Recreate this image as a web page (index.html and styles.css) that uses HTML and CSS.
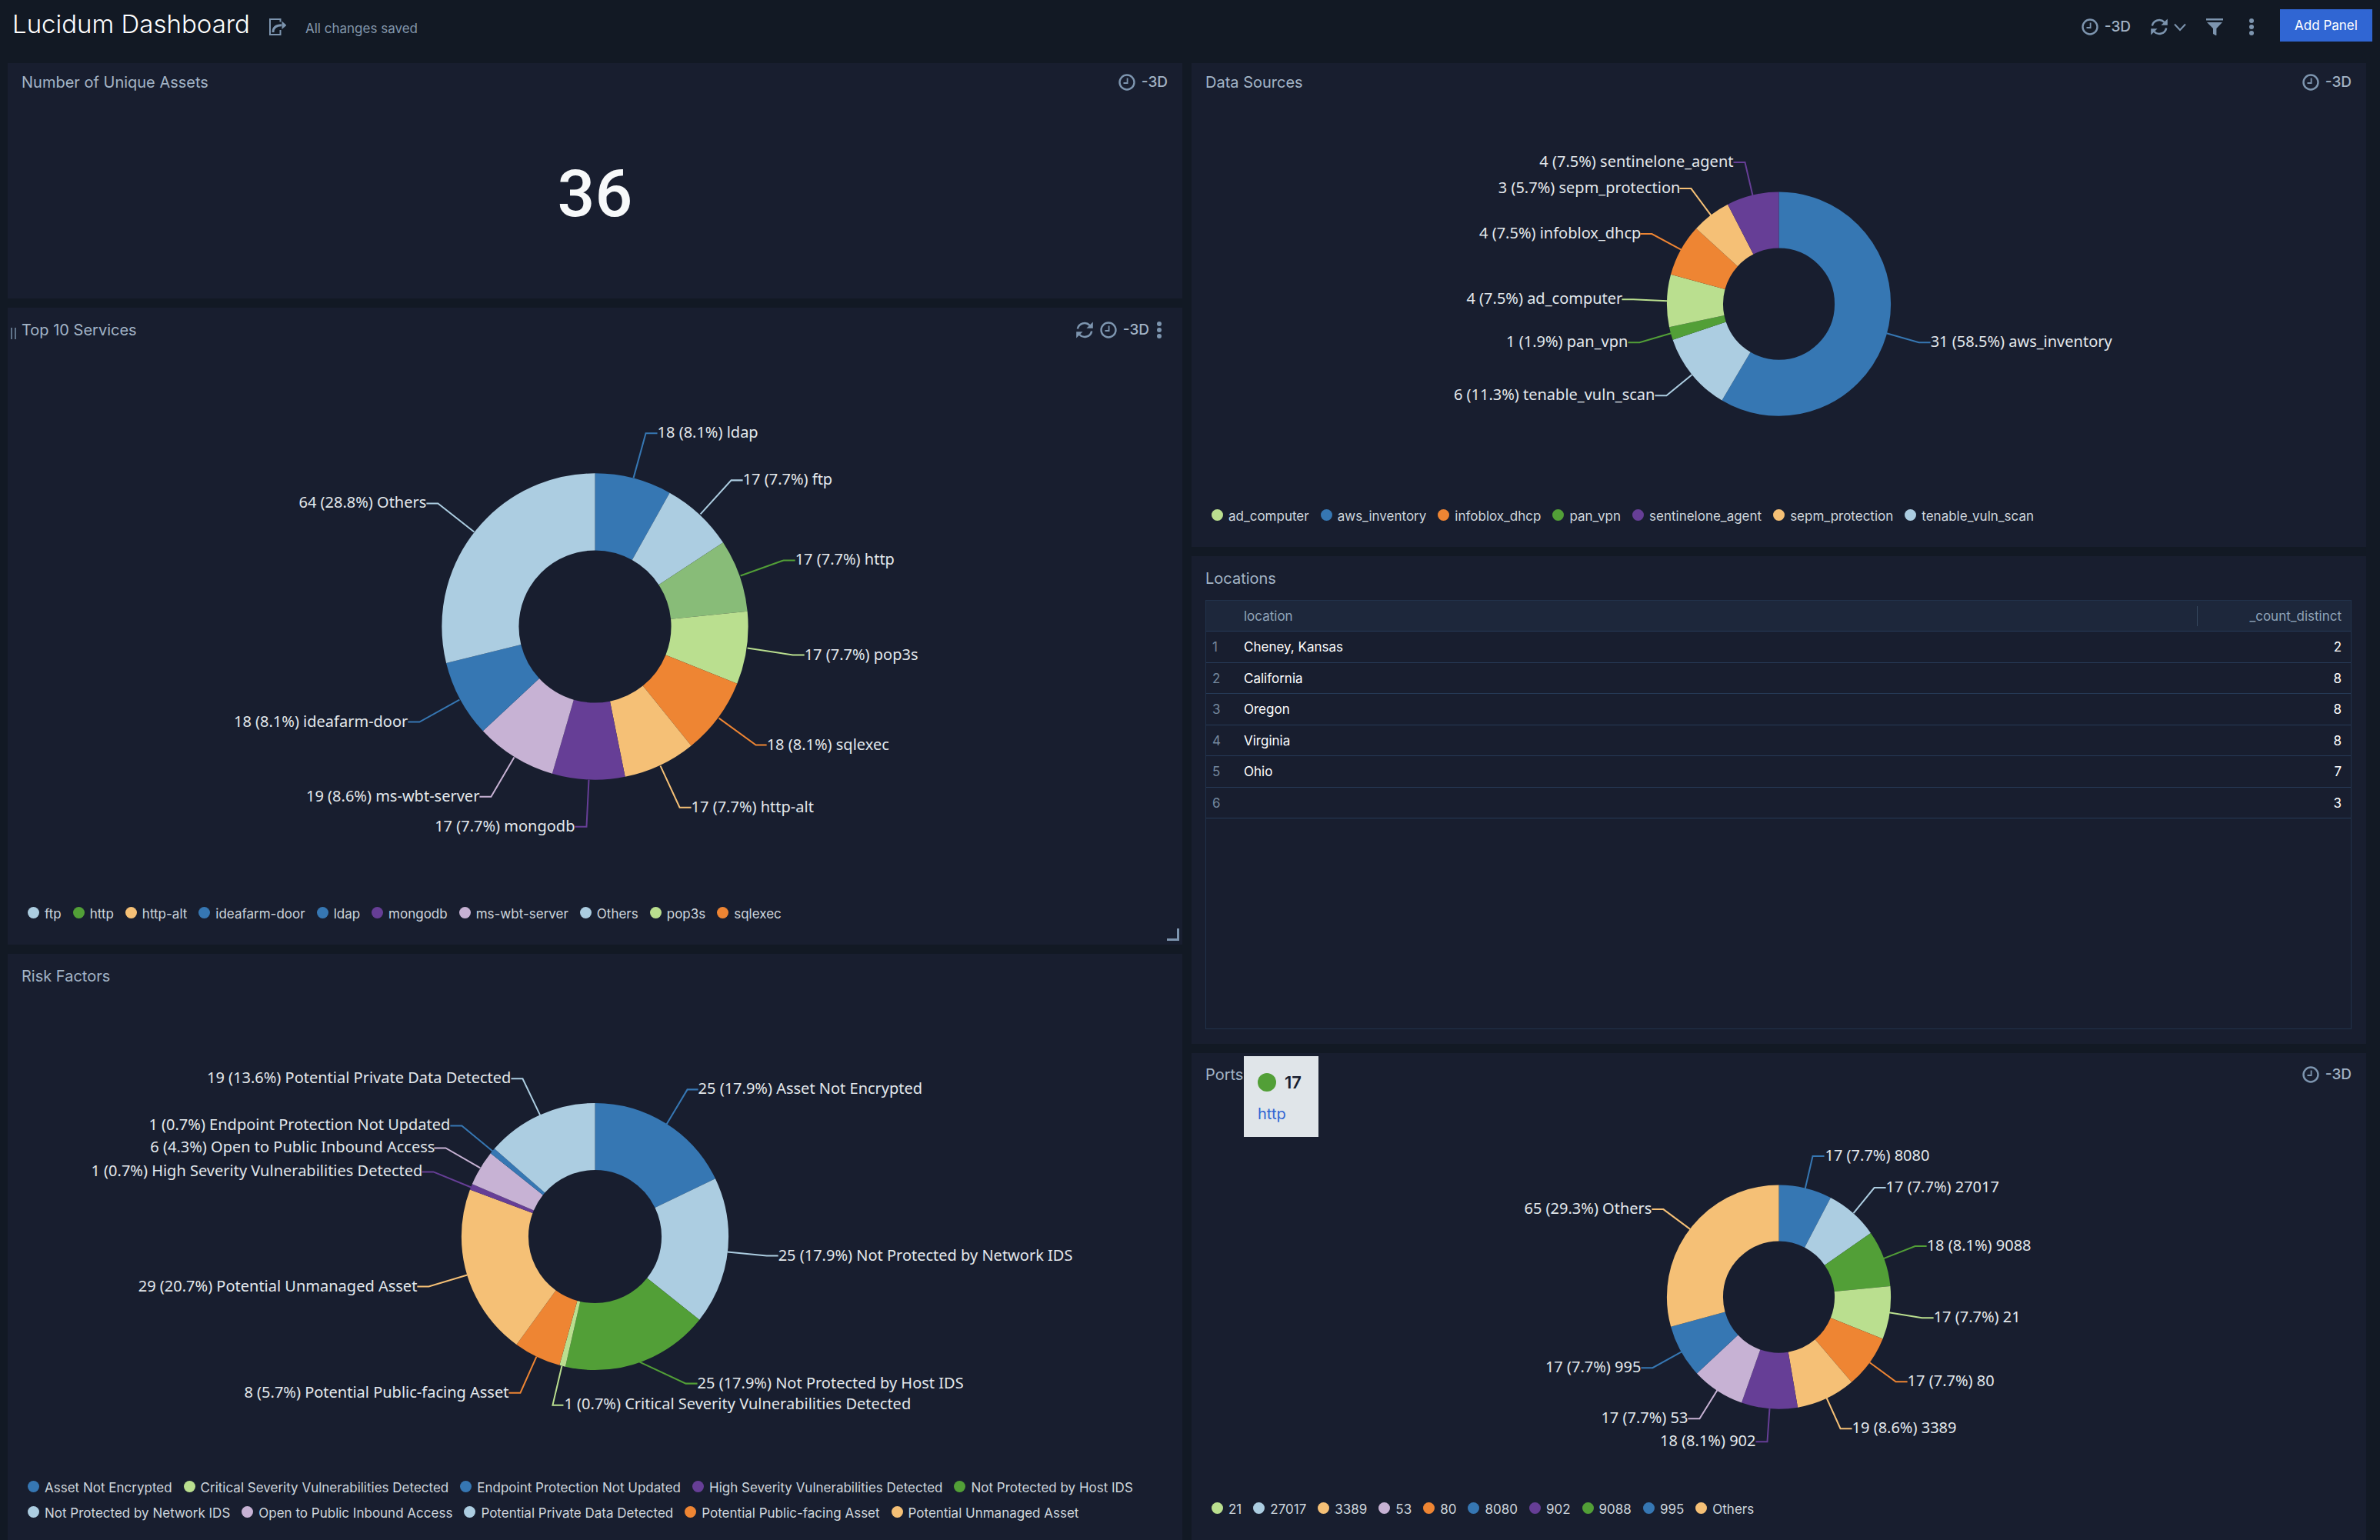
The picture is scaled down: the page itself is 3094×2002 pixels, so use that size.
FILE: index.html
```html
<!DOCTYPE html>
<html lang="en">
<head>
<meta charset="utf-8">
<title>Lucidum Dashboard</title>
<link rel="stylesheet" href="styles.css">
</head>
<body>
<svg class="sprite" aria-hidden="true">
  <symbol id="i-clock" viewBox="0 0 22 22"><circle cx="11" cy="11" r="9.5" fill="none" stroke="currentColor" stroke-width="2.4"/><path d="M11.6 5.5V12H6.5" fill="none" stroke="currentColor" stroke-width="1.8"/></symbol>
  <symbol id="i-refresh" viewBox="0 0 22 22"><path d="M1.8 9.6A9.3 9.3 0 0 1 17.6 4.9M20.2 12.4A9.3 9.3 0 0 1 4.4 17.1" fill="none" stroke="currentColor" stroke-width="2.5"/><path d="M21.8 .6V8.8H13.4ZM.2 21.4V13.2H8.6Z" fill="currentColor"/></symbol>
  <symbol id="i-dots" viewBox="0 0 8 22"><g fill="currentColor"><circle cx="4" cy="3" r="3"/><circle cx="4" cy="11" r="3"/><circle cx="4" cy="19" r="3"/></g></symbol>
  <symbol id="i-filter" viewBox="0 0 22 22"><path d="M0 0H22V2.6H0ZM1 5H21L13.4 13V22.6L9 20V13Z" fill="currentColor"/></symbol>
  <symbol id="i-chevron" viewBox="0 0 16 22"><path d="M1 7.5L8 15L15 7.5" fill="none" stroke="currentColor" stroke-width="2"/></symbol>
  <symbol id="i-share" viewBox="0 0 22 22"><path d="M14.5 4.5V1H1V21H14.5V15" fill="none" stroke="currentColor" stroke-width="2"/><path d="M5 18C5 11.5 8.5 8.8 16 8.8" fill="none" stroke="currentColor" stroke-width="3"/><path d="M16.5 3.5L22.4 8.8L16.5 14Z" fill="currentColor"/></symbol>
</svg>

<header class="topbar">
  <h1 class="topbar-title">Lucidum Dashboard</h1>
  <button class="icon-button" type="button" aria-label="Share"><svg class="icon"><use href="#i-share"/></svg></button>
  <span class="topbar-status">All changes saved</span>
  <div class="topbar-actions">
    <button class="icon-button" type="button"><svg class="icon"><use href="#i-clock"/></svg><span>-3D</span></button>
    <button class="icon-button" type="button" aria-label="Refresh"><svg class="icon"><use href="#i-refresh"/></svg><svg class="icon icon-chevron"><use href="#i-chevron"/></svg></button>
    <button class="icon-button" type="button" aria-label="Filter"><svg class="icon"><use href="#i-filter"/></svg></button>
    <button class="icon-button" type="button" aria-label="More"><svg class="icon"><use href="#i-dots"/></svg></button>
    <button class="primary-button" type="button">Add Panel</button>
  </div>
</header>

<main class="board">
  <div class="column">
    <section class="panel panel-assets">
      <div class="panel-head"><h2>Number of Unique Assets</h2>
        <div class="panel-tools"><button class="icon-button" type="button"><svg class="icon"><use href="#i-clock"/></svg><span>-3D</span></button></div></div>
      <p class="big-number">36</p>
    </section>

    <section class="panel panel-services">
      <span class="drag-handle"></span>
      <div class="panel-head"><h2>Top 10 Services</h2>
        <div class="panel-tools panel-tools-active">
          <button class="icon-button" type="button" aria-label="Refresh panel"><svg class="icon"><use href="#i-refresh"/></svg></button>
          <button class="icon-button" type="button"><svg class="icon"><use href="#i-clock"/></svg><span>-3D</span></button>
          <button class="icon-button" type="button" aria-label="Panel menu"><svg class="icon icon-dots"><use href="#i-dots"/></svg></button>
        </div></div>
      <svg class="chart" viewBox="-763 -300 1526 600" role="img" aria-label="Top 10 services">
        <g class="ring" transform="rotate(-90)" stroke-width="100">
          <circle r="149" pathLength="222" class="blue" stroke-dasharray="18 222"/>
          <circle r="149" pathLength="222" class="sky" stroke-dasharray="17 222" stroke-dashoffset="-18"/>
          <circle r="149" pathLength="222" class="green-hover" stroke-dasharray="17 222" stroke-dashoffset="-35"/>
          <circle r="149" pathLength="222" class="lime" stroke-dasharray="17 222" stroke-dashoffset="-52"/>
          <circle r="149" pathLength="222" class="orange" stroke-dasharray="18 222" stroke-dashoffset="-69"/>
          <circle r="149" pathLength="222" class="peach" stroke-dasharray="17 222" stroke-dashoffset="-87"/>
          <circle r="149" pathLength="222" class="purple" stroke-dasharray="17 222" stroke-dashoffset="-104"/>
          <circle r="149" pathLength="222" class="lilac" stroke-dasharray="19 222" stroke-dashoffset="-121"/>
          <circle r="149" pathLength="222" class="blue" stroke-dasharray="18 222" stroke-dashoffset="-140"/>
          <circle r="149" pathLength="222" class="sky" stroke-dasharray="64 222" stroke-dashoffset="-158"/>
        </g>
        <g class="leaders">
          <path class="blue" d="M50-193L66-251H81"/>
          <path class="sky" d="M137-146L177-190H192"/>
          <path class="green" d="M189-66L245-86H260"/>
          <path class="lime" d="M198 28L257 37H272"/>
          <path class="orange" d="M161 119L209 154H223"/>
          <path class="peach" d="M85 181L110 235H125"/>
          <path class="purple" d="M-8 199L-11 260H-26"/>
          <path class="lilac" d="M-105 170L-135 221H-150"/>
          <path class="blue" d="M-176 95L-228 124H-243"/>
          <path class="sky" d="M-157-123L-204-160H-219"/>
        </g>
        <g class="labels">
          <text x="81" y="-245">18 (8.1%) ldap</text>
          <text x="192" y="-184">17 (7.7%) ftp</text>
          <text x="260" y="-80">17 (7.7%) http</text>
          <text x="272" y="43">17 (7.7%) pop3s</text>
          <text x="223" y="160">18 (8.1%) sqlexec</text>
          <text x="125" y="241">17 (7.7%) http-alt</text>
        </g>
        <g class="labels labels-left">
          <text x="-26" y="266">17 (7.7%) mongodb</text>
          <text x="-150" y="227">19 (8.6%) ms-wbt-server</text>
          <text x="-243" y="130">18 (8.1%) ideafarm-door</text>
          <text x="-219" y="-154">64 (28.8%) Others</text>
        </g>
      </svg>
      <ul class="legend">
        <li class="sky">ftp</li><li class="green">http</li><li class="peach">http-alt</li><li class="blue">ideafarm-door</li><li class="blue">ldap</li><li class="purple">mongodb</li><li class="lilac">ms-wbt-server</li><li class="sky">Others</li><li class="lime">pop3s</li><li class="orange">sqlexec</li>
      </ul>
      <span class="resize-handle"></span>
    </section>

    <section class="panel panel-risk">
      <div class="panel-head"><h2>Risk Factors</h2></div>
      <svg class="chart" viewBox="-763 -300 1526 600" role="img" aria-label="Risk factors">
        <g class="ring" transform="rotate(-90)" stroke-width="87">
          <circle r="130" pathLength="140" class="blue" stroke-dasharray="25 140"/>
          <circle r="130" pathLength="140" class="sky" stroke-dasharray="25 140" stroke-dashoffset="-25"/>
          <circle r="130" pathLength="140" class="green" stroke-dasharray="25 140" stroke-dashoffset="-50"/>
          <circle r="130" pathLength="140" class="lime" stroke-dasharray="1 140" stroke-dashoffset="-75"/>
          <circle r="130" pathLength="140" class="orange" stroke-dasharray="8 140" stroke-dashoffset="-76"/>
          <circle r="130" pathLength="140" class="peach" stroke-dasharray="29 140" stroke-dashoffset="-84"/>
          <circle r="130" pathLength="140" class="purple" stroke-dasharray="1 140" stroke-dashoffset="-113"/>
          <circle r="130" pathLength="140" class="lilac" stroke-dasharray="6 140" stroke-dashoffset="-114"/>
          <circle r="130" pathLength="140" class="blue" stroke-dasharray="1 140" stroke-dashoffset="-120"/>
          <circle r="130" pathLength="140" class="sky" stroke-dasharray="19 140" stroke-dashoffset="-121"/>
        </g>
        <g class="leaders">
          <path class="blue" d="M93-146L120-191H134"/>
          <path class="sky" d="M172 20L223 25H238"/>
          <path class="green" d="M58 163L118 191H133"/>
          <path class="lime" d="M-43 168L-55 219H-41"/>
          <path class="orange" d="M-76 156L-97 203H-112"/>
          <path class="peach" d="M-166 50L-216 65H-231"/>
          <path class="purple" d="M-161-64L-210-84H-225"/>
          <path class="lilac" d="M-149-89L-194-115H-209"/>
          <path class="blue" d="M-133-111L-173-144H-188"/>
          <path class="sky" d="M-71-157L-94-205H-109"/>
        </g>
        <g class="labels">
          <text x="134" y="-185">25 (17.9%) Asset Not Encrypted</text>
          <text x="238" y="31">25 (17.9%) Not Protected by Network IDS</text>
          <text x="133" y="197">25 (17.9%) Not Protected by Host IDS</text>
          <text x="-40" y="224">1 (0.7%) Critical Severity Vulnerabilities Detected</text>
        </g>
        <g class="labels labels-left">
          <text x="-112" y="209">8 (5.7%) Potential Public-facing Asset</text>
          <text x="-231" y="71">29 (20.7%) Potential Unmanaged Asset</text>
          <text x="-224" y="-78">1 (0.7%) High Severity Vulnerabilities Detected</text>
          <text x="-208" y="-109">6 (4.3%) Open to Public Inbound Access</text>
          <text x="-188" y="-138">1 (0.7%) Endpoint Protection Not Updated</text>
          <text x="-109" y="-199">19 (13.6%) Potential Private Data Detected</text>
        </g>
      </svg>
      <ul class="legend legend-tall">
        <li class="blue">Asset Not Encrypted</li><li class="lime">Critical Severity Vulnerabilities Detected</li><li class="blue">Endpoint Protection Not Updated</li><li class="purple">High Severity Vulnerabilities Detected</li><li class="green">Not Protected by Host IDS</li><li class="sky">Not Protected by Network IDS</li><li class="lilac">Open to Public Inbound Access</li><li class="sky">Potential Private Data Detected</li><li class="orange">Potential Public-facing Asset</li><li class="peach">Potential Unmanaged Asset</li>
      </ul>
    </section>
  </div>

  <div class="column">
    <section class="panel">
      <div class="panel-head"><h2>Data Sources</h2>
        <div class="panel-tools"><button class="icon-button" type="button"><svg class="icon"><use href="#i-clock"/></svg><span>-3D</span></button></div></div>
      <svg class="chart" viewBox="-763 -250 1526 500" role="img" aria-label="Data sources">
        <g class="ring" transform="rotate(-90)" stroke-width="73">
          <circle r="109" pathLength="53" class="blue" stroke-dasharray="31 53"/>
          <circle r="109" pathLength="53" class="sky" stroke-dasharray="6 53" stroke-dashoffset="-31"/>
          <circle r="109" pathLength="53" class="green" stroke-dasharray="1 53" stroke-dashoffset="-37"/>
          <circle r="109" pathLength="53" class="lime" stroke-dasharray="4 53" stroke-dashoffset="-38"/>
          <circle r="109" pathLength="53" class="orange" stroke-dasharray="4 53" stroke-dashoffset="-42"/>
          <circle r="109" pathLength="53" class="peach" stroke-dasharray="3 53" stroke-dashoffset="-46"/>
          <circle r="109" pathLength="53" class="purple" stroke-dasharray="4 53" stroke-dashoffset="-49"/>
        </g>
        <g class="leaders">
          <path class="blue" d="M140 38L182 50H197"/>
          <path class="sky" d="M-113 92L-146 119H-161"/>
          <path class="green" d="M-140 38L-181 50H-196"/>
          <path class="lime" d="M-145-4L-189-6H-204"/>
          <path class="orange" d="M-126-70L-165-91H-180"/>
          <path class="peach" d="M-88-115L-114-150H-129"/>
          <path class="purple" d="M-34-141L-44-184H-59"/>
        </g>
        <g class="labels"><text x="197" y="56">31 (58.5%) aws_inventory</text></g>
        <g class="labels labels-left">
          <text x="-161" y="125">6 (11.3%) tenable_vuln_scan</text>
          <text x="-196" y="56">1 (1.9%) pan_vpn</text>
          <text x="-203" y="0">4 (7.5%) ad_computer</text>
          <text x="-179" y="-85">4 (7.5%) infoblox_dhcp</text>
          <text x="-128" y="-144">3 (5.7%) sepm_protection</text>
          <text x="-59" y="-178">4 (7.5%) sentinelone_agent</text>
        </g>
      </svg>
      <ul class="legend">
        <li class="lime">ad_computer</li><li class="blue">aws_inventory</li><li class="orange">infoblox_dhcp</li><li class="green">pan_vpn</li><li class="purple">sentinelone_agent</li><li class="peach">sepm_protection</li><li class="sky">tenable_vuln_scan</li>
      </ul>
    </section>

    <section class="panel">
      <div class="panel-head"><h2>Locations</h2></div>
      <div class="table-frame">
        <table class="data-table">
          <thead><tr><th class="row-index"></th><th>location</th><th class="count">_count_distinct</th></tr></thead>
          <tbody>
            <tr><td class="row-index">1</td><td>Cheney, Kansas</td><td class="count">2</td></tr>
            <tr><td class="row-index">2</td><td>California</td><td class="count">8</td></tr>
            <tr><td class="row-index">3</td><td>Oregon</td><td class="count">8</td></tr>
            <tr><td class="row-index">4</td><td>Virginia</td><td class="count">8</td></tr>
            <tr><td class="row-index">5</td><td>Ohio</td><td class="count">7</td></tr>
            <tr><td class="row-index">6</td><td></td><td class="count">3</td></tr>
          </tbody>
        </table>
      </div>
    </section>

    <section class="panel">
      <div class="panel-head"><h2>Ports</h2>
        <div class="panel-tools"><button class="icon-button" type="button"><svg class="icon"><use href="#i-clock"/></svg><span>-3D</span></button></div></div>
      <svg class="chart" viewBox="-763 -250 1526 500" role="img" aria-label="Ports">
        <g class="ring" transform="rotate(-90)" stroke-width="73">
          <circle r="109" pathLength="222" class="blue" stroke-dasharray="17 222"/>
          <circle r="109" pathLength="222" class="sky" stroke-dasharray="17 222" stroke-dashoffset="-17"/>
          <circle r="109" pathLength="222" class="green" stroke-dasharray="18 222" stroke-dashoffset="-34"/>
          <circle r="109" pathLength="222" class="lime" stroke-dasharray="17 222" stroke-dashoffset="-52"/>
          <circle r="109" pathLength="222" class="orange" stroke-dasharray="17 222" stroke-dashoffset="-69"/>
          <circle r="109" pathLength="222" class="peach" stroke-dasharray="19 222" stroke-dashoffset="-86"/>
          <circle r="109" pathLength="222" class="purple" stroke-dasharray="18 222" stroke-dashoffset="-105"/>
          <circle r="109" pathLength="222" class="lilac" stroke-dasharray="17 222" stroke-dashoffset="-123"/>
          <circle r="109" pathLength="222" class="blue" stroke-dasharray="17 222" stroke-dashoffset="-140"/>
          <circle r="109" pathLength="222" class="peach" stroke-dasharray="65 222" stroke-dashoffset="-157"/>
        </g>
        <g class="leaders">
          <path class="blue" d="M34-140L44-183H59"/>
          <path class="sky" d="M97-109L124-142H139"/>
          <path class="green" d="M136-50L177-66H192"/>
          <path class="lime" d="M143 20L186 27H201"/>
          <path class="orange" d="M118 85L152 110H167"/>
          <path class="peach" d="M62 131L80 171H95"/>
          <path class="purple" d="M-12 145L-15 188H-30"/>
          <path class="lilac" d="M-80 121L-103 158H-118"/>
          <path class="blue" d="M-126 71L-164 92H-179"/>
          <path class="peach" d="M-115-88L-150-114H-165"/>
        </g>
        <g class="labels">
          <text x="60" y="-177">17 (7.7%) 8080</text>
          <text x="139" y="-136">17 (7.7%) 27017</text>
          <text x="192" y="-60">18 (8.1%) 9088</text>
          <text x="201" y="33">17 (7.7%) 21</text>
          <text x="167" y="116">17 (7.7%) 80</text>
          <text x="95" y="177">19 (8.6%) 3389</text>
        </g>
        <g class="labels labels-left">
          <text x="-30" y="194">18 (8.1%) 902</text>
          <text x="-118" y="164">17 (7.7%) 53</text>
          <text x="-179" y="98">17 (7.7%) 995</text>
          <text x="-165" y="-108">65 (29.3%) Others</text>
        </g>
      </svg>
      <ul class="legend">
        <li class="lime">21</li><li class="sky">27017</li><li class="peach">3389</li><li class="lilac">53</li><li class="orange">80</li><li class="blue">8080</li><li class="purple">902</li><li class="green">9088</li><li class="blue">995</li><li class="peach">Others</li>
      </ul>
      <div class="tooltip" role="tooltip">
        <p class="tooltip-value green">17</p>
        <p class="tooltip-name">http</p>
      </div>
    </section>
  </div>
</main>
</body>
</html>
```

FILE: styles.css
```css
* { box-sizing: border-box; }

body {
  margin: 0;
  min-height: 100vh;
  display: flex;
  flex-direction: column;
  background: #121924;
  color: #e3e8ec;
  font-family: Inter, "Liberation Sans", sans-serif;
}

h1, h2, p, ul { margin: 0; padding: 0; }
button { font: inherit; border: 0; background: none; padding: 0; }

.blue { --c: #3677b3; }
.sky { --c: #accde1; }
.green { --c: #529f37; }
.green-hover { --c: #88bc78; }
.lime { --c: #badf8f; }
.orange { --c: #ee8533; }
.peach { --c: #f5c076; }
.purple { --c: #663e96; }
.lilac { --c: #c7b2d4; }

.sprite { display: none; }
.icon { display: block; width: 22px; height: 22px; color: #7d95af; overflow: visible; }
.icon-dots { width: 8px; }
.icon-chevron { width: 16px; }

.icon-button {
  display: flex;
  align-items: center;
  gap: 8px;
  color: #a3b4c6;
  font-size: 19px;
  line-height: 24px;
  font-weight: 500;
}

.topbar {
  position: relative;
  z-index: 1;
  display: flex;
  align-items: center;
  height: 82px;
  padding: 0 10px 12px 16px;
  background: #121924;
}
.topbar-title {
  margin-right: 25px;
  padding-bottom: 8px;
  font-size: 33px;
  line-height: 40px;
  font-weight: 300;
  color: #fff;
}
.topbar-status { margin-left: 25px; padding-top: 4px; font-size: 17px; line-height: 24px; color: #8296ab; }
.topbar-actions { display: flex; align-items: center; gap: 26px; margin-left: auto; }
.primary-button {
  margin-bottom: 4px;
  width: 120px;
  height: 42px;
  background: #3066d3;
  color: #fff;
  font-size: 17px;
  line-height: 24px;
}

.board {
  flex: 1;
  display: grid;
  grid-template-columns: minmax(0, 1fr) minmax(0, 1fr);
  gap: 12px;
  margin-top: -4px;
  padding: 0 18px 0 10px;
}
.column { display: flex; flex-direction: column; gap: 12px; }
.panel {
  position: relative;
  display: flex;
  flex-direction: column;
  flex: 1 1 0;
  background: #181e2f;
}
.panel-assets { flex-grow: 310; }
.panel-services { flex-grow: 828; }
.panel-risk { flex-grow: 762; }

.panel-head {
  display: flex;
  align-items: center;
  justify-content: space-between;
  height: 57px;
  padding: 0 19px 0 18px;
}
.panel-head h2 { font-size: 20px; line-height: 24px; font-weight: 400; color: #a3b4c6; }
.panel-tools { display: flex; align-items: center; gap: 9px; }
.panel-tools-active { margin-right: 7px; }

.big-number {
  flex: 1;
  display: flex;
  align-items: center;
  justify-content: center;
  padding-bottom: 20px;
  font-family: Roboto, sans-serif;
  font-size: 86px;
  line-height: 100px;
  font-weight: 500;
  color: #f7f9fa;
}

.chart { display: block; width: 100%; flex: 1 1 0; min-height: 0; }
.ring circle { fill: none; stroke: var(--c); }
.leaders path { fill: none; stroke: var(--c); stroke-width: 2; }
.labels { fill: #e3e8ec; font-family: "Noto Sans", "Open Sans", sans-serif; font-size: 20px; }
.labels-left { text-anchor: end; }

.legend {
  display: flex;
  flex-wrap: wrap;
  column-gap: 15px;
  padding: 0 26px 23px;
  list-style: none;
  font-size: 17px;
  line-height: 33px;
  color: #ced6dd;
}
.legend-tall { padding-bottom: 18px; }
.legend li { display: flex; align-items: center; gap: 7px; }
.legend li::before { content: ""; width: 15px; height: 15px; margin-bottom: 4px; border-radius: 50%; background: var(--c); }

.table-frame { flex: 1; margin: 0 19px 19px 18px; border: 1px solid #22324a; }
.data-table { width: 100%; border-collapse: separate; border-spacing: 0; font-size: 17px; line-height: 24px; color: #fff; }
.data-table th, .data-table td { height: 41px; padding: 0 12px 0 0; border-bottom: 1px solid #263a57; text-align: left; font-weight: 400; }
.data-table th { height: 40px; background: #1d273b; color: #8fa3b8; }
.data-table tbody tr:nth-child(even) td { height: 40px; }
.data-table .row-index { width: 49px; padding-left: 8px; color: #75889d; }
.data-table .count { width: 200px; text-align: right; }
.data-table th.count { background: linear-gradient(#35475e, #35475e) 0 50% / 1px 26px no-repeat #1d273b; }

.drag-handle {
  position: absolute;
  left: 4px;
  top: 26px;
  width: 7px;
  height: 15px;
  border: solid #5f7389;
  border-width: 0 2px;
}
.resize-handle {
  position: absolute;
  right: 4px;
  bottom: 5px;
  width: 16px;
  height: 16px;
  border: solid #7d95af;
  border-width: 0 3px 3px 0;
}

.tooltip {
  position: absolute;
  left: 68px;
  top: 4px;
  width: 97px;
  height: 105px;
  padding: 22px 18px;
  background: #e0e5e9;
  font-size: 20px;
  line-height: 24px;
}
.tooltip-value { display: flex; align-items: center; gap: 11px; margin-bottom: 17px; color: #181e2f; font-size: 22px; font-weight: 600; }
.tooltip-value::before { content: ""; width: 24px; height: 24px; border-radius: 50%; background: var(--c); }
.tooltip-name { color: #3066d3; }
```
